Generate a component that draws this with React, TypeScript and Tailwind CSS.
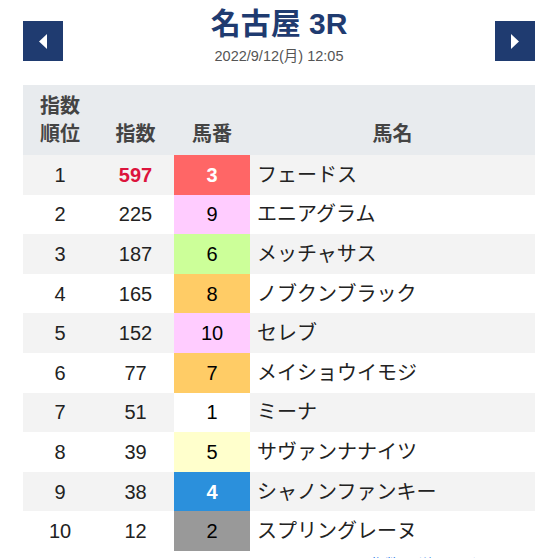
import React from 'react';

interface Row {
  rank: number;
  index: number;
  num: number;
  name: string;
  cell: string;
}

const rows: Row[] = [
  { rank: 1, index: 597, num: 3, name: 'フェードス', cell: 'bg-[#ff6666] text-white font-bold' },
  { rank: 2, index: 225, num: 9, name: 'エニアグラム', cell: 'bg-[#ffccff] text-black' },
  { rank: 3, index: 187, num: 6, name: 'メッチャサス', cell: 'bg-[#ccff99] text-black' },
  { rank: 4, index: 165, num: 8, name: 'ノブクンブラック', cell: 'bg-[#ffcc66] text-black' },
  { rank: 5, index: 152, num: 10, name: 'セレブ', cell: 'bg-[#ffccff] text-black' },
  { rank: 6, index: 77, num: 7, name: 'メイショウイモジ', cell: 'bg-[#ffcc66] text-black' },
  { rank: 7, index: 51, num: 1, name: 'ミーナ', cell: 'bg-white text-black' },
  { rank: 8, index: 39, num: 5, name: 'サヴァンナナイツ', cell: 'bg-[#ffffcc] text-black' },
  { rank: 9, index: 38, num: 4, name: 'シャノンファンキー', cell: 'bg-[#2b90dc] text-white font-bold' },
  { rank: 10, index: 12, num: 2, name: 'スプリングレーヌ', cell: 'bg-[#999999] text-black' },
];

const font = "font-['Liberation_Sans','Noto_Sans_CJK_JP',sans-serif]";

export default function App() {
  return (
    <div className={`${font} w-[546px] h-[558px] overflow-hidden bg-white`}>
      <div className="ml-[23px] w-[512px]">
        {/* Race header */}
        <div className="flex items-start pt-[21px]">
          <button className="w-10 h-10 bg-[#1f3b70] flex items-center justify-center">
            <svg width="10" height="15" viewBox="0 0 10 15">
              <polygon points="9,0 9,15 1,7.5" fill="white" />
            </svg>
          </button>
          <div className="flex-1 flex flex-col items-center -mt-[17px]">
            <h1 className="text-[30px] leading-[40px] font-bold text-[#1f3b70]">名古屋 3R</h1>
            <p className="text-[14.5px] leading-[20px] text-[#555] mt-[2px]">2022/9/12(月) 12:05</p>
          </div>
          <button className="w-10 h-10 bg-[#1f3b70] flex items-center justify-center">
            <svg width="10" height="15" viewBox="0 0 10 15">
              <polygon points="1,0 1,15 9,7.5" fill="white" />
            </svg>
          </button>
        </div>

        {/* Index table */}
        <div className="mt-[19px]">
          <div className="grid grid-cols-[74px_77px_76px_1fr] bg-[#e8ebee] text-[#444] font-bold text-[20px] leading-[28px] h-[70px] pb-[7px] items-end">
            <div className="text-center">指数<br />順位</div>
            <div className="text-center">指数</div>
            <div className="text-center">馬番</div>
            <div className="text-center">馬名</div>
          </div>
          {rows.map((r, i) => (
            <div
              key={r.rank}
              className={`grid grid-cols-[74px_77px_76px_1fr] h-[39.6px] text-[20px] items-stretch ${
                i % 2 === 0 ? 'bg-[#f3f3f3]' : 'bg-white'
              }`}
            >
              <div className="flex items-center justify-center text-[#222]">{r.rank}</div>
              <div
                className={`flex items-center justify-center ${
                  r.rank === 1 ? 'text-[#dc143c] font-bold' : 'text-[#222]'
                }`}
              >
                {r.index}
              </div>
              <div className={`flex items-center justify-center ${r.cell}`}>{r.num}</div>
              <div className="flex items-center pl-[7px] text-[#222]">{r.name}</div>
            </div>
          ))}
          <div className="text-right text-[14px] leading-[20px] text-[#1a73e8] pr-[20px] mt-[3px]">
            指数の詳細はこちら ＞
          </div>
        </div>
      </div>
    </div>
  );
}
